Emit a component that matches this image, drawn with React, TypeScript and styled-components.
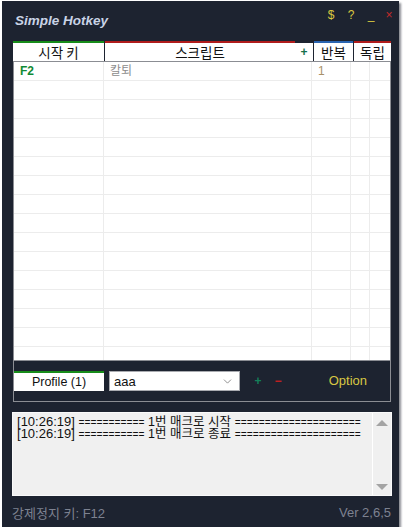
import styled, { createGlobalStyle } from 'styled-components';
import { ChevronDown } from 'lucide-react';

const GlobalStyle = createGlobalStyle`
    html, body {
        margin: 0;
        padding: 0;
        background: #ffffff;
    }
`;

const KOR = `"Liberation Sans", "Noto Sans CJK KR", sans-serif`;

const Window = styled.div`
    margin: 1px 0 0 2px;
    width: 397px;
    height: 526px;
    background: #1d2330;
    box-shadow: 2px 2px 2px rgba(40, 44, 56, 0.55);
    display: flex;
    flex-direction: column;
    font-family: ${KOR};
`;

const TitleBar = styled.div`
    height: 40px;
    display: flex;
    justify-content: space-between;
    align-items: flex-start;
`;

const Title = styled.div`
    padding: 12px 0 0 13px;
    font-family: 'Liberation Sans', Arial, sans-serif;
    font-weight: bold;
    font-style: italic;
    font-size: 13.5px;
    line-height: 16px;
    color: #c9d3e6;
`;

const Controls = styled.div`
    display: flex;
    padding: 6px 2px 0 0;
`;

const ControlButton = styled.span<{ $color: string; $w: number }>`
    width: ${(p) => p.$w}px;
    text-align: center;
    font-family: 'Liberation Sans', Arial, sans-serif;
    font-size: 12px;
    line-height: 16px;
    color: ${(p) => p.$color};
`;

const Table = styled.div`
    margin-left: 11px;
    width: 378px;
`;

const HeaderRow = styled.div`
    display: flex;
    gap: 1px;
    height: 20px;
`;

const HeaderCell = styled.div<{ $w: number; $accent: string }>`
    width: ${(p) => p.$w}px;
    box-sizing: border-box;
    border-top: 2px solid ${(p) => p.$accent};
    background: #ffffff;
    display: flex;
    align-items: center;
    justify-content: center;
    font-family: "Noto Sans CJK KR", sans-serif;
    font-size: 13.5px;
    line-height: 18px;
    color: #111111;
`;

const ScriptHeader = styled.div`
    width: 208px;
    display: flex;
`;

const ScriptLabel = styled(HeaderCell)`
    flex: 1;
`;

const PlusBox = styled.div`
    width: 18px;
    margin-top: 2px;
    background: #ffffff;
    display: flex;
    align-items: center;
    justify-content: center;
    font-family: 'Liberation Sans', Arial, sans-serif;
    font-weight: bold;
    font-size: 12px;
    color: #16704a;
`;

const Body = styled.div`
    height: 298px;
    overflow: hidden;
    background: #ffffff;
    border: 1px solid #8b8d93;
`;

const Row = styled.div`
    display: flex;
    height: 19px;
    box-sizing: border-box;
    border-bottom: 1px solid #ececec;
`;

const Cell = styled.div<{ $w: number; $color?: string; $bold?: boolean; $last?: boolean }>`
    width: ${(p) => p.$w}px;
    box-sizing: border-box;
    border-right: ${(p) => (p.$last ? 'none' : '1px solid #ececec')};
    padding-left: 6px;
    font-family: ${KOR};
    font-size: 12px;
    line-height: 19px;
    font-weight: ${(p) => (p.$bold ? 'bold' : 'normal')};
    color: ${(p) => p.$color ?? '#333'};
`;

const ProfilePanel = styled.div`
    width: 378px;
    margin-left: 11px;
    box-sizing: border-box;
    height: 41px;
    border: 1px solid #8b8d93;
    border-top: none;
    display: flex;
    align-items: flex-start;
    padding-top: 10px;
`;

const ProfileTab = styled.div`
    width: 90px;
    height: 20px;
    box-sizing: border-box;
    border-top: 2px solid #178c1a;
    background: #ffffff;
    text-align: center;
    font-size: 12.5px;
    line-height: 18px;
    color: #111111;
`;

const Select = styled.div`
    margin-left: 5px;
    width: 131px;
    height: 20px;
    box-sizing: border-box;
    border: 1px solid #a9abb0;
    background: #ffffff;
    display: flex;
    align-items: center;
    justify-content: space-between;
    padding: 0 5px 0 4px;
    font-size: 13px;
    color: #111111;
`;

const SignButton = styled.span<{ $color: string; $first?: boolean }>`
    width: 20px;
    margin-left: ${(p) => (p.$first ? '8px' : '0')};
    text-align: center;
    font-weight: bold;
    font-size: 12px;
    line-height: 20px;
    color: ${(p) => p.$color};
`;

const OptionButton = styled.span`
    margin-left: auto;
    margin-right: 23px;
    font-size: 13px;
    line-height: 20px;
    color: #d7c743;
`;

const LogBox = styled.div`
    margin: 10px 0 0 10px;
    width: 380px;
    height: 84px;
    box-sizing: border-box;
    border: 1px solid #fafafa;
    background: #f0f0f0;
    display: flex;
`;

const LogText = styled.div`
    flex: 1;
    padding: 3px 0 0 4px;
    font-family: "Liberation Sans", "Noto Sans CJK KR", sans-serif;
    font-size: 13px;
    color: #111111;
    white-space: pre;
    overflow: hidden;
`;

const LogLine = styled.div`
    height: 12px;
    line-height: 12px;
`;

const Rule = styled.span`
    font-family: 'Liberation Mono', monospace;
    font-size: 10px;
`;

const Hangul = styled.span`
    font-size: 12.5px;
`;

const ScrollBar = styled.div`
    width: 18px;
    border-left: 1px solid #ffffff;
    display: flex;
    flex-direction: column;
    justify-content: space-between;
    align-items: center;
    padding: 7px 0 5px;
`;

const Arrow = styled.div<{ $down?: boolean }>`
    width: 0;
    height: 0;
    border-left: 6px solid transparent;
    border-right: 6px solid transparent;
    ${(p) => (p.$down ? 'border-top: 6px solid #a4a4a4;' : 'border-bottom: 6px solid #a4a4a4;')}
`;

const Footer = styled.div`
    flex: 1;
    display: flex;
    justify-content: space-between;
    align-items: center;
    padding: 2px 8px 0 10px;
    font-size: 13px;
    color: #7d8290;
`;

const COLS = [90, 208, 39, 19, 16];

const rows = Array.from({ length: 16 }, (_, i) =>
    i === 0 ? ['F2', '칼퇴', '1', '', ''] : ['', '', '', '', ''],
);

const cellColor = ['#108a35', '#8d8d8d', '#a89068', '#333', '#333'];

const logs = [
    { time: '10:26:19', msg: '1번 매크로 시작' },
    { time: '10:26:19', msg: '1번 매크로 종료' },
];

export default function App() {
    return (
        <>
            <GlobalStyle />
            <Window>
                <TitleBar>
                    <Title>Simple Hotkey</Title>
                    <Controls>
                        <ControlButton $color="#d9c940" $w={20}>$</ControlButton>
                        <ControlButton $color="#d9c940" $w={20}>?</ControlButton>
                        <ControlButton $color="#d9c940" $w={20}>_</ControlButton>
                        <ControlButton $color="#c42a2a" $w={16}>×</ControlButton>
                    </Controls>
                </TitleBar>
                <Table>
                    <HeaderRow>
                        <HeaderCell $w={91} $accent="#178c1a">시작 키</HeaderCell>
                        <ScriptHeader>
                            <ScriptLabel $w={190} $accent="#b01c1c">스크립트</ScriptLabel>
                            <PlusBox>+</PlusBox>
                        </ScriptHeader>
                        <HeaderCell $w={39} $accent="#2a64b0">반복</HeaderCell>
                        <HeaderCell $w={37} $accent="#b01c1c">독립</HeaderCell>
                    </HeaderRow>
                    <Body>
                        {rows.map((r, i) => (
                            <Row key={i}>
                                {r.map((v, j) => (
                                    <Cell
                                        key={j}
                                        $w={COLS[j]}
                                        $color={cellColor[j]}
                                        $bold={j === 0}
                                        $last={j === COLS.length - 1}
                                    >
                                        {v}
                                    </Cell>
                                ))}
                            </Row>
                        ))}
                    </Body>
                </Table>
                <ProfilePanel>
                    <ProfileTab>Profile (1)</ProfileTab>
                    <Select>
                        aaa
                        <ChevronDown size={13} color="#777" strokeWidth={1.5} />
                    </Select>
                    <SignButton $color="#14805a" $first>+</SignButton>
                    <SignButton $color="#c42020">−</SignButton>
                    <OptionButton>Option</OptionButton>
                </ProfilePanel>
                <LogBox>
                    <LogText>
                        {logs.map((l, i) => (
                            <LogLine key={i}>
                                [{l.time}] <Rule>===========</Rule> <Hangul>{l.msg}</Hangul>{' '}
                                <Rule>=====================</Rule>
                            </LogLine>
                        ))}
                    </LogText>
                    <ScrollBar>
                        <Arrow />
                        <Arrow $down />
                    </ScrollBar>
                </LogBox>
                <Footer>
                    <span>강제정지 키: F12</span>
                    <span>Ver 2,6,5</span>
                </Footer>
            </Window>
        </>
    );
}
